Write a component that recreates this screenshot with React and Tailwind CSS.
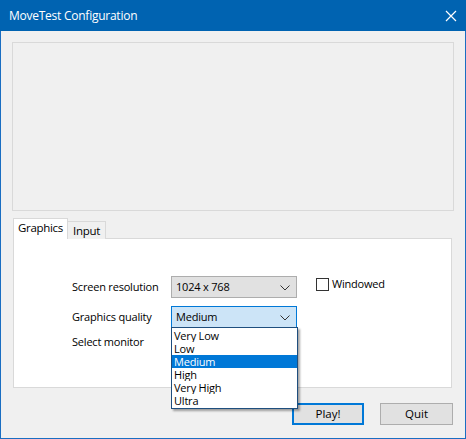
import React, { useState } from 'react';

const qualities = ["Very Low", "Low", "Medium", "High", "Very High", "Ultra"];

const Chevron = () => (
  <svg width="10" height="6" viewBox="0 0 10 6" className="absolute right-[6px] top-[8px]">
    <path d="M0.5 0.5 L5 5 L9.5 0.5" fill="none" stroke="#333" strokeWidth="1" />
  </svg>
);

const App = () => {
  const [quality, setQuality] = useState("Medium");
  const [tab, setTab] = useState("Graphics");

  return (
    <div className="w-[466px] h-[439px] bg-[#f0f0f0] border-x border-b border-[#1a6ec2] flex flex-col text-[12px] text-black" style={{ fontFamily: '"Open Sans", "Noto Sans", sans-serif' }}>
      {/* title bar */}
      <div className="h-[31px] bg-[#0063b1] -mx-px flex items-center justify-between pl-[9px] pr-[9px] shrink-0">
        <span className="text-white text-[12px] tracking-[-0.25px]">MoveTest Configuration</span>
        <svg width="12" height="12" viewBox="0 0 12 12">
          <path d="M1 1 L11 11 M11 1 L1 11" stroke="#fff" strokeWidth="1.2" />
        </svg>
      </div>

      <div className="flex flex-col px-[11px] pt-[11px]">
        {/* preview area */}
        <div className="h-[169px] border border-[#d9d9d9] bg-[#f0f0f0]"></div>

        {/* tabs */}
        <div className="flex items-end mt-[7px] pl-[1px] h-[21px] relative z-10">
          <button
            onClick={() => setTab("Graphics")}
            className="h-[21px] w-[55px] bg-white border-x border-t border-[#d9d9d9] text-[11.5px] leading-none pb-[3px] tracking-[-0.3px]"
          >
            Graphics
          </button>
          <button
            onClick={() => setTab("Input")}
            className="h-[18px] w-[38px] bg-[#f0f0f0] border-r border-t border-[#d9d9d9] text-[11.5px] leading-none pt-[1px] tracking-[-0.3px]"
          >
            Input
          </button>
        </div>

        {/* tab pane */}
        <div className="h-[150px] -mt-px ml-[1px] mr-[2px] bg-white border border-[#d9d9d9] relative">
          <div className="grid grid-cols-[99px_126px_auto] gap-y-[8px] pl-[58px] pt-[37px] items-center text-[11px] tracking-[-0.2px]">
            <span>Screen resolution</span>
            <div className="relative h-[22px] bg-[#e1e1e1] border border-[#adadad] pl-[4px] flex items-center">
              1024 x 768
              <Chevron />
            </div>
            <label className="flex items-center gap-[3px] -mt-[5px] ml-[19px]">
              <span className="w-[13px] h-[13px] border border-[#333] bg-white inline-block"></span>
              Windowed
            </label>

            <span>Graphics quality</span>
            <div className="relative h-[22px] bg-[#cce4f7] border border-[#0078d7] pl-[4px] flex items-center">
              {quality}
              <Chevron />
              {/* open drop list */}
              <div className="absolute left-[-1px] top-[20px] w-[127px] bg-white border border-[#1e4e7e] shadow-[2px_2px_2px_rgba(0,0,0,0.35)] z-20 py-[1px]">
                {qualities.map((q) => (
                  <div
                    key={q}
                    onClick={() => setQuality(q)}
                    className={"h-[13px] leading-[13px] pl-[2px] text-[11px] overflow-hidden " + (q === quality ? "bg-[#0078d7] text-white" : "text-black")}
                  >
                    {q}
                  </div>
                ))}
              </div>
            </div>
            <span></span>

            <span className="-mt-[2px]">Select monitor</span>
            <span></span>
            <span></span>
          </div>
        </div>

        {/* buttons */}
        <div className="flex justify-end gap-[16px] mt-[15px] pr-[1px]">
          <button className="w-[72px] h-[22px] bg-[#e1e1e1] border-2 border-[#0078d7] text-[11.5px] leading-none">Play!</button>
          <button className="w-[73px] h-[22px] bg-[#e1e1e1] border border-[#adadad] text-[11.5px] leading-none">Quit</button>
        </div>
      </div>
    </div>
  );
};

export default App;
